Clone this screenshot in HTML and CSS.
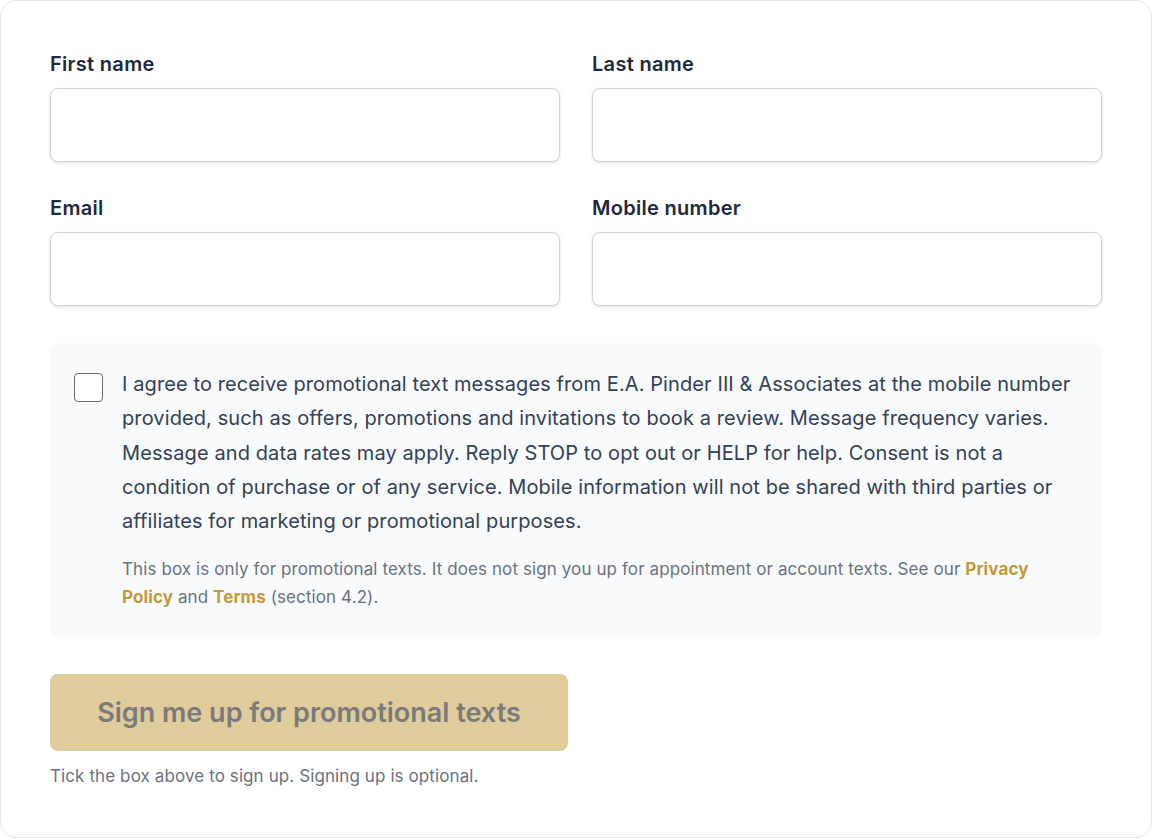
FILE: index.html
```html
<!DOCTYPE html>
<html lang="en">
<head>
  <meta charset="UTF-8">
  <meta name="viewport" content="width=device-width, initial-scale=1.0">
  <title>Promotional texts</title>
  <link rel="stylesheet" href="styles.css">
</head>
<body>
  <form class="card">
    <div class="fields">
      <div class="field">
        <label for="first">First name</label>
        <input type="text" id="first" class="ipt">
      </div>
      <div class="field">
        <label for="last">Last name</label>
        <input type="text" id="last" class="ipt">
      </div>
      <div class="field">
        <label for="email">Email</label>
        <input type="email" id="email" class="ipt">
      </div>
      <div class="field">
        <label for="mobile">Mobile number</label>
        <input type="tel" id="mobile" class="ipt">
      </div>
    </div>

    <div class="consent">
      <span class="check"></span>
      <div class="consentText">
        <p class="main">I agree to receive promotional text messages from E.A. Pinder III &amp; Associates at the mobile number provided, such as offers, promotions and invitations to book a review. Message frequency varies. Message and data rates may apply. Reply STOP to opt out or HELP for help. Consent is not a condition of purchase or of any service. Mobile information will not be shared with third parties or affiliates for marketing or promotional purposes.</p>
        <p class="note">This box is only for promotional texts. It does not sign you up for appointment or account texts. See our <a href="#">Privacy Policy</a> and <a href="#">Terms</a> (section 4.2).</p>
      </div>
    </div>

    <button type="button" class="submit" disabled>Sign me up for promotional texts</button>
    <p class="hint">Tick the box above to sign up. Signing up is optional.</p>
  </form>
</body>
</html>
```

FILE: styles.css
```css
* {
  margin: 0;
  padding: 0;
  box-sizing: border-box;
}
body {
  font-family: Inter, "Liberation Sans", sans-serif;
  color: #1e293b;
  background: #fff;
}
.card {
  width: 1152px;
  height: 838px;
  border: 1px solid #e5e7eb;
  border-radius: 16px;
  padding: 49px 49px 0 49px;
}
.fields {
  display: grid;
  grid-template-columns: 1fr 1fr;
  column-gap: 32px;
  row-gap: 32px;
}
.field label {
  display: block;
  font-size: 20px;
  line-height: 28px;
  font-weight: 600;
  letter-spacing: 0.3px;
  color: #1e293b;
  margin-bottom: 10px;
}
.ipt {
  display: block;
  width: 100%;
  height: 74px;
  border: 1px solid #d1d5db;
  border-radius: 8px;
  background: #fff;
  box-shadow: 0 1px 3px rgba(0, 0, 0, 0.14);
  font: inherit;
  padding: 0 16px;
}
.consent {
  display: flex;
  gap: 19px;
  margin-top: 37px;
  padding: 24px 24px 26px 24px;
  background: #f8fafc;
  border-radius: 10px;
}
.check {
  flex: none;
  width: 29px;
  height: 29px;
  margin-top: 6px;
  border: 1.5px solid #6b6b6b;
  border-radius: 4px;
  background: #fff;
}
.consentText .main {
  font-size: 20px;
  line-height: 34.3px;
  letter-spacing: 0.1px;
  color: #334155;
}
.consentText .note {
  margin-top: 17px;
  font-size: 17px;
  line-height: 28px;
  letter-spacing: 0.1px;
  color: #6b7280;
}
.note a {
  color: #c29a3c;
  font-weight: 700;
  text-decoration: none;
}
.submit {
  display: block;
  margin-top: 37px;
  width: 518px;
  height: 77px;
  border: none;
  border-radius: 8px;
  background: #dfcb9b;
  color: #7a7a7a;
  font-family: inherit;
  font-size: 27px;
  font-weight: 600;
}
.hint {
  margin-top: 13px;
  font-size: 17px;
  line-height: 24px;
  letter-spacing: 0.1px;
  color: #6b7280;
}
```
